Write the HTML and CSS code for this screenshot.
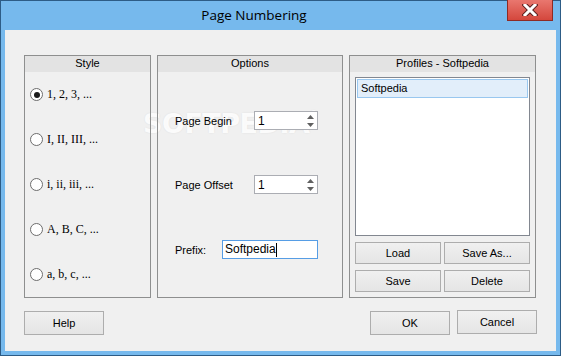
FILE: index.html
```html
<!DOCTYPE html>
<html lang="en">
  <head>
    <meta charset="UTF-8" />
    <title>Page Numbering</title>
    <link rel="stylesheet" href="styles.css">
  </head>
  <body>
    <div class="window">
      <div class="titlebar">
        <span class="title">Page Numbering</span>
        <button class="close" type="button">
          <svg width="16" height="12" viewBox="0 0 16 12">
            <path d="M3 1 L13 11 M13 1 L3 11" stroke="#5a2020" stroke-width="5" stroke-linecap="square" />
            <path d="M3 1 L13 11 M13 1 L3 11" stroke="#ffffff" stroke-width="3" stroke-linecap="square" />
          </svg>
        </button>
      </div>

      <div class="client">
        <div class="watermark">SOFTPEDIA<sup>®</sup></div>

        <div class="groups">
          <!-- numbering style -->
          <div class="group group-style">
            <div class="group-head">Style</div>
            <label class="radio-row"><span class="radio checked"></span>1, 2, 3, ...</label>
            <label class="radio-row"><span class="radio"></span>I, II, III, ...</label>
            <label class="radio-row"><span class="radio"></span>i, ii, iii, ...</label>
            <label class="radio-row"><span class="radio"></span>A, B, C, ...</label>
            <label class="radio-row"><span class="radio"></span>a, b, c, ...</label>
          </div>

          <!-- options -->
          <div class="group group-options">
            <div class="group-head">Options</div>
            <div class="opt-row">
              <span class="opt-label">Page Begin</span>
              <div class="spin">
                <span class="spin-val">1</span>
                <span class="spin-arrows">
                  <svg width="7" height="4" viewBox="0 0 7 4"><path d="M0 4 L3.5 0 L7 4 Z" fill="#606060" /></svg>
                  <svg width="7" height="4" viewBox="0 0 7 4"><path d="M0 0 L3.5 4 L7 0 Z" fill="#606060" /></svg>
                </span>
              </div>
            </div>
            <div class="opt-row">
              <span class="opt-label">Page Offset</span>
              <div class="spin">
                <span class="spin-val">1</span>
                <span class="spin-arrows">
                  <svg width="7" height="4" viewBox="0 0 7 4"><path d="M0 4 L3.5 0 L7 4 Z" fill="#606060" /></svg>
                  <svg width="7" height="4" viewBox="0 0 7 4"><path d="M0 0 L3.5 4 L7 0 Z" fill="#606060" /></svg>
                </span>
              </div>
            </div>
            <div class="opt-row">
              <span class="opt-label prefix-label">Prefix:</span>
              <div class="textbox">Softpedia<span class="caret"></span></div>
            </div>
          </div>

          <!-- profiles -->
          <div class="group group-profiles">
            <div class="group-head">Profiles - Softpedia</div>
            <div class="listbox">
              <div class="list-item selected">Softpedia</div>
            </div>
            <div class="btn-grid">
              <button class="btn" type="button">Load</button>
              <button class="btn" type="button">Save As...</button>
              <button class="btn" type="button">Save</button>
              <button class="btn" type="button">Delete</button>
            </div>
          </div>
        </div>

        <div class="bottom">
          <button class="btn dlg-btn" type="button">Help</button>
          <div class="bottom-right">
            <button class="btn dlg-btn" type="button">OK</button>
            <button class="btn dlg-btn cancel" type="button">Cancel</button>
          </div>
        </div>
      </div>
    </div>
  </body>
</html>
```

FILE: styles.css
```css
body {
  margin: 0;
  padding: 0;
  font-family: 'Liberation Sans', Arial, sans-serif;
  font-size: 11px;
  color: #000;
  background: #fff;
}

.window {
  width: 561px;
  height: 356px;
  box-sizing: border-box;
  border: 1px solid #2d5c86;
  background-color: #76b9ed; /* frame colour */
  display: flex;
  flex-direction: column;
}

.titlebar {
  height: 29px;
  display: flex;
  align-items: flex-start;
}

.title {
  width: 506px;
  text-align: center;
  font-family: 'Open Sans', sans-serif;
  font-size: 13.5px;
  line-height: 29px;
  color: #000;
}

.close {
  margin: -1px 0 0 0;
  width: 46px;
  height: 21px;
  padding: 0;
  border: 1px solid #8e2a24;
  border-top: none;
  background: linear-gradient(#e9776f, #d4473d);
  display: flex;
  align-items: center;
  justify-content: center;
}

.client {
  position: relative;
  margin: 0 4px 4px 4px;
  flex: 1;
  background-color: #f0f0f0;
  padding: 25px 19px 0 19px;
}

.groups {
  position: relative;
  display: flex;
  gap: 6px;
  height: 243px;
}

.group {
  box-sizing: border-box;
  border: 1px solid #8e8f8f;
  display: flex;
  flex-direction: column;
}

.group-head {
  flex-shrink: 0;
  height: 16px;
  line-height: 15px;
  text-align: center;
  background-color: #e3e3e3;
  font-size: 11px;
}

.group-style {
  width: 127px;
}

.group-options {
  width: 186px;
}

.group-profiles {
  width: 187px;
  padding: 0 5px 5px 5px;
}

.group-profiles .group-head {
  margin: 0 -5px;
}

/* radio buttons */
.radio-row {
  flex-shrink: 0;
  height: 45px;
  display: flex;
  align-items: center;
  padding-left: 5px;
  font-family: 'Liberation Serif', 'Times New Roman', serif;
  font-size: 12px;
}

.radio {
  width: 11px;
  height: 11px;
  border: 1px solid #6d6d6d;
  border-radius: 50%;
  background: #fff;
  margin-right: 4px;
  display: flex;
  align-items: center;
  justify-content: center;
}

.radio.checked::after {
  content: '';
  width: 6px;
  height: 6px;
  border-radius: 50%;
  background: #1a1a1a;
}

/* options */
.opt-row {
  display: flex;
  align-items: center;
  padding-left: 17px;
  height: 19px;
}

.opt-row:nth-of-type(2) {
  margin-top: 39px;
}

.opt-row:nth-of-type(3) {
  margin-top: 45px;
}

.opt-row:nth-of-type(4) {
  margin-top: 46px;
}

.opt-label {
  width: 79px;
  font-size: 11px;
}

.prefix-label {
  width: 47px;
}

.spin {
  box-sizing: border-box;
  width: 64px;
  height: 19px;
  border: 1px solid #abadb3;
  background: #fff;
  display: flex;
  align-items: center;
  justify-content: space-between;
  padding: 0 3px 0 3px;
}

.spin-val {
  font-size: 12px;
}

.spin-arrows {
  display: flex;
  flex-direction: column;
  gap: 4px;
}

.spin-arrows svg {
  display: block;
}

.textbox {
  box-sizing: border-box;
  width: 96px;
  height: 19px;
  border: 1px solid #569de5;
  background: #fff;
  padding-left: 2px;
  font-size: 12px;
  line-height: 17px;
  display: flex;
  align-items: center;
}

.caret {
  width: 1px;
  height: 14px;
  background: #000;
}

/* profiles */
.listbox {
  margin-top: 5px;
  height: 159px;
  box-sizing: border-box;
  border: 1px solid #828790;
  background: #fff;
  padding: 1px;
}

.list-item {
  height: 19px;
  box-sizing: border-box;
  padding-left: 3px;
  line-height: 17px;
  font-size: 11px;
}

.list-item.selected {
  background: #e2eefa;
  border: 1px solid #99c7ef;
}

.btn-grid {
  margin-top: 6px;
  display: grid;
  grid-template-columns: 86px 86px;
  column-gap: 3px;
  row-gap: 6px;
}

.btn {
  box-sizing: border-box;
  height: 22px;
  border: 1px solid #adadad;
  background: linear-gradient(#f0f0f0, #e5e5e5);
  font-family: 'Liberation Sans', Arial, sans-serif;
  font-size: 11px;
  color: #000;
  padding: 0;
}

.bottom {
  display: flex;
  justify-content: space-between;
  margin-top: 13px;
}

.bottom-right {
  display: flex;
  gap: 7px;
}

.dlg-btn {
  width: 80px;
  height: 24px;
}

.cancel {
  margin-top: -1px;
}

/* watermark, drawn behind the controls */
.watermark {
  position: absolute;
  left: 138px;
  top: 78px;
  font-family: 'DejaVu Sans', sans-serif;
  font-weight: bold;
  font-size: 27px;
  letter-spacing: -0.5px;
  color: rgba(255, 255, 255, 0.9);
  text-shadow: 0 0 2px rgba(0, 0, 0, 0.08);
  pointer-events: none;
}

.watermark sup {
  font-size: 9px;
  vertical-align: top;
  position: relative;
  top: 1px;
}
```
